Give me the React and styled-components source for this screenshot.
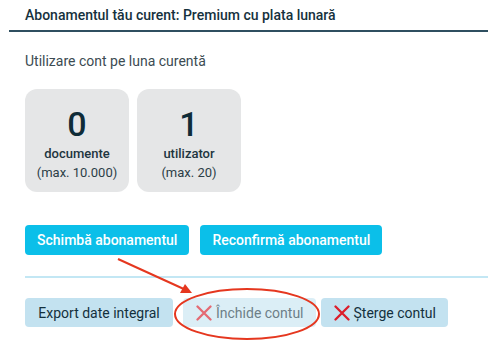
import React from "react";
import styled, { createGlobalStyle } from "styled-components";

const GlobalStyle = createGlobalStyle`
  html, body {
    margin: 0;
    padding: 0;
    background: #fff;
    font-family: Roboto, "Liberation Sans", sans-serif;
  }
`;

const Page = styled.div`
  position: relative;
  width: 488px;
  height: 344px;
  overflow: hidden;
  padding-left: 9px;
  box-sizing: border-box;
`;

const Header = styled.div`
  height: 32px;
  box-sizing: border-box;
  padding: 6px 16px 0;
  border-bottom: 2px solid #2f4f60;
  font-size: 14px;
  font-weight: 500;
  color: #16313d;
  line-height: 18px;
`;

const Body = styled.div`
  padding: 0 16px;
`;

const Subtitle = styled.div`
  margin-top: 20px;
  font-size: 14px;
  line-height: 18px;
  color: #3c4b52;
`;

const Cards = styled.div`
  display: flex;
  gap: 8px;
  margin-top: 19px;
`;

const Card = styled.div`
  width: 104px;
  height: 103px;
  border-radius: 12px;
  background: #e5e6e7;
  display: flex;
  flex-direction: column;
  align-items: center;
  padding-top: 16px;
  box-sizing: border-box;
`;

const Big = styled.div`
  font-size: 34px;
  font-weight: 500;
  line-height: 38px;
  color: #0f2c38;
`;

const Label = styled.div`
  margin-top: 2px;
  font-size: 13px;
  font-weight: 500;
  line-height: 18px;
  color: #1e3540;
`;

const Limit = styled.div`
  margin-top: 1px;
  font-size: 13px;
  line-height: 18px;
  color: #2c3e47;
`;

const Row = styled.div`
  display: flex;
  gap: ${(p) => p.gap}px;
  margin-top: ${(p) => p.top}px;
`;

const Button = styled.button`
  height: ${(p) => (p.primary ? 30 : 29)}px;
  min-width: ${(p) => p.minWidth || 0}px;
  justify-content: center;
  padding: 0 ${(p) => (p.icon ? 12 : 12)}px 0 ${(p) => (p.icon ? 13 : 12)}px;
  margin-left: ${(p) => p.shift || 0}px;
  border: none;
  border-radius: 4px;
  font-family: inherit;
  font-size: 14px;
  display: flex;
  align-items: center;
  gap: 4px;
  background: ${(p) => (p.primary ? "#0bbfe9" : p.faded ? "#dbeef6" : "#c3e2f0")};
  color: ${(p) => (p.primary ? "#fff" : p.faded ? "#6d7f88" : "#13303d")};
  font-weight: ${(p) => (p.primary ? 500 : 400)};
`;

const Divider = styled.div`
  margin-top: 21px;
  height: 2px;
  background: #c3e7f4;
  margin-right: -16px;
`;

const Annotation = styled.svg`
  position: absolute;
  left: 0;
  top: 0;
  pointer-events: none;
`;

const Cross = ({ color }) => (
  <svg width="16" height="16" viewBox="0 0 16 16">
    <path d="M1.5 1.5 L14.5 14.5 M14.5 1.5 L1.5 14.5" stroke={color} strokeWidth="2.3" strokeLinecap="round" />
  </svg>
);

export default function App() {
  return (
    <Page>
      <GlobalStyle />
      <Header>Abonamentul tău curent: Premium cu plata lunară</Header>
      <Body>
        <Subtitle>Utilizare cont pe luna curentă</Subtitle>
        <Cards>
          <Card>
            <Big>0</Big>
            <Label>documente</Label>
            <Limit>(max. 10.000)</Limit>
          </Card>
          <Card>
            <Big>1</Big>
            <Label>utilizator</Label>
            <Limit>(max. 20)</Limit>
          </Card>
        </Cards>
        <Row top={33} gap={11}>
          <Button primary>Schimbă abonamentul</Button>
          <Button primary>Reconfirmă abonamentul</Button>
        </Row>
        <Divider />
        <Row top={20} gap={10}>
          <Button minWidth={148}>Export date integral</Button>
          <Button faded icon minWidth={132}>
            <Cross color="#e46a73" />
            Închide contul
          </Button>
          <Button icon shift={-5} minWidth={127}>
            <Cross color="#dc1e2b" />
            Șterge contul
          </Button>
        </Row>
      </Body>
      <Annotation width="488" height="344" viewBox="0 0 488 344">
        <ellipse cx="247" cy="314" rx="72" ry="25" fill="none" stroke="#e5371f" strokeWidth="2" />
        <line x1="118" y1="259" x2="186" y2="290" stroke="#e5371f" strokeWidth="2" />
        <path d="M192 293 L180 293 L185 284 Z" fill="#e5371f" />
      </Annotation>
    </Page>
  );
}
